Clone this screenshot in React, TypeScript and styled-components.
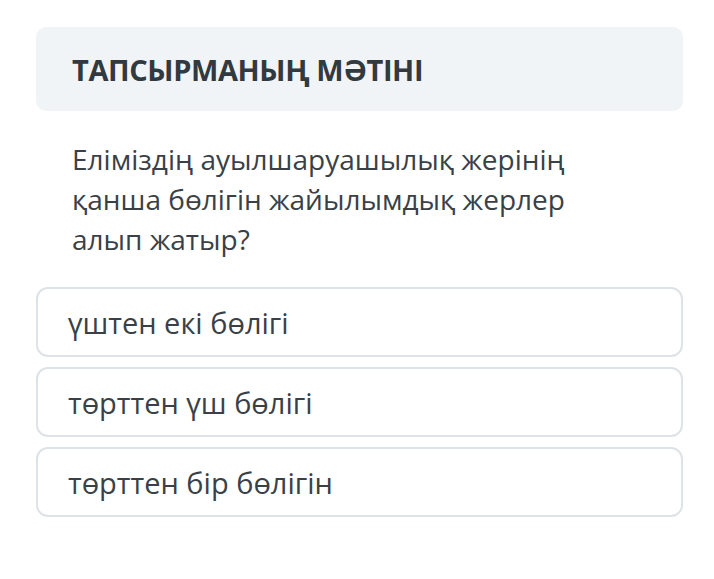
import React from 'react';
import styled, { createGlobalStyle } from 'styled-components';

const GlobalStyle = createGlobalStyle`
  html, body {
    margin: 0;
    padding: 0;
    background: #ffffff;
  }
  body {
    font-family: 'Open Sans', 'Noto Sans', sans-serif;
    color: #3a4146;
  }
`;

const Page = styled.div`
  width: 714px;
  height: 579px;
  padding: 27px 31px 0 36px;
  box-sizing: border-box;
  display: flex;
  flex-direction: column;
`;

const Header = styled.div`
  height: 84px;
  background: #f1f4f6;
  border-radius: 10px;
  display: flex;
  align-items: center;
  padding: 0 36px;
`;

const Title = styled.h2`
  margin: 0;
  font-size: 29px;
  font-weight: 700;
  color: #32393f;
  letter-spacing: -0.4px;
`;

const Question = styled.p`
  margin: 28px 0 28px;
  padding: 0 36px;
  font-size: 28px;
  line-height: 40px;
  color: #3a4146;
`;

const Options = styled.div`
  display: flex;
  flex-direction: column;
  gap: 10px;
`;

const Option = styled.div`
  height: 70px;
  box-sizing: border-box;
  border: 2px solid #dde3e6;
  border-radius: 12px;
  display: flex;
  align-items: center;
  padding: 0 30px;
  font-size: 29px;
  color: #3a4146;
`;

const answers = ['үштен екі бөлігі', 'төрттен үш бөлігі', 'төрттен бір бөлігін'];

export default function App() {
  return (
    <>
      <GlobalStyle />
      <Page>
        <Header>
          <Title>ТАПСЫРМАНЫҢ МӘТІНІ</Title>
        </Header>
        <Question>
          Еліміздің ауылшаруашылық жерінің
          <br />
          қанша бөлігін жайылымдық жерлер
          <br />
          алып жатыр?
        </Question>
        <Options>
          {answers.map((a) => (
            <Option key={a}>{a}</Option>
          ))}
        </Options>
      </Page>
    </>
  );
}
